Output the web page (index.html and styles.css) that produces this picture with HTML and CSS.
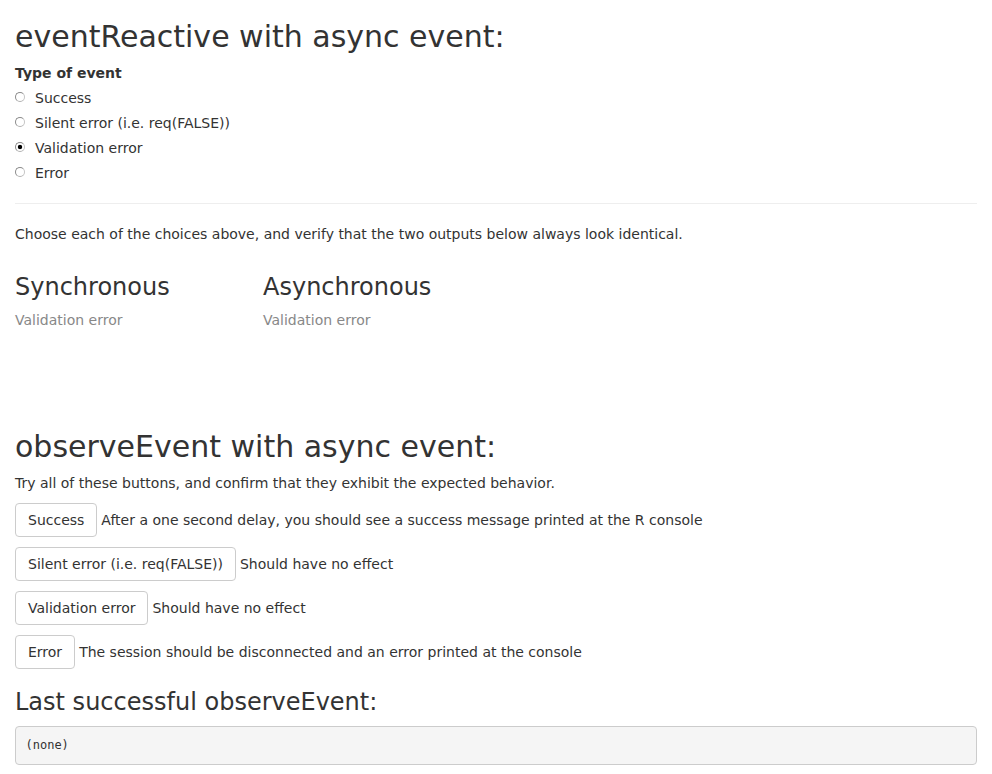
FILE: index.html
```
<!DOCTYPE html>
<html>
<head>
<meta charset="utf-8">
<title>async events</title>
<link rel="stylesheet" href="styles.css">
</head>
<body>
<div class="container">
  <h2>eventReactive with async event:</h2>
  <div class="form-group">
    <label class="control-label">Type of event</label>
    <div class="options">
      <div class="radio"><label><input type="radio" name="type" value="success"><span>Success</span></label></div>
      <div class="radio"><label><input type="radio" name="type" value="silent"><span>Silent error (i.e. req(FALSE))</span></label></div>
      <div class="radio"><label><input type="radio" name="type" value="validation" checked><span>Validation error</span></label></div>
      <div class="radio"><label><input type="radio" name="type" value="error"><span>Error</span></label></div>
    </div>
  </div>
  <hr>
  <p>Choose each of the choices above, and verify that the two outputs below always look identical.</p>
  <div class="row">
    <div class="col">
      <h3>Synchronous</h3>
      <div class="validation">Validation error</div>
    </div>
    <div class="col">
      <h3>Asynchronous</h3>
      <div class="validation">Validation error</div>
    </div>
  </div>

  <h2 class="second">observeEvent with async event:</h2>
  <p>Try all of these buttons, and confirm that they exhibit the expected behavior.</p>
  <div class="btn-row"><button class="btn">Success</button><span>After a one second delay, you should see a success message printed at the R console</span></div>
  <div class="btn-row"><button class="btn">Silent error (i.e. req(FALSE))</button><span>Should have no effect</span></div>
  <div class="btn-row"><button class="btn">Validation error</button><span>Should have no effect</span></div>
  <div class="btn-row"><button class="btn">Error</button><span>The session should be disconnected and an error printed at the console</span></div>

  <h3>Last successful observeEvent:</h3>
  <pre class="output">(none)</pre>
</div>
</body>
</html>
```
FILE: styles.css
```
* { box-sizing: border-box; }
html, body { margin: 0; padding: 0; }
body {
  font-family: "DejaVu Sans", sans-serif;
  font-size: 14px;
  line-height: 1.42857143;
  color: #333;
  background: #fff;
}
.container { padding: 0 15px; }
h2, h3 {
  font-weight: 500;
  line-height: 1.1;
  margin: 20px 0 10px;
  color: #333;
}
h2 { font-size: 30px; }
h3 { font-size: 24px; }
p { margin: 0 0 10px; }
.form-group { margin-bottom: 15px; }
.control-label {
  display: inline-block;
  font-weight: 700;
  margin-bottom: 5px;
}
.options { margin-top: -10px; }
.radio { margin: 10px 0; }
.radio + .radio { margin-top: -5px; }
.radio label {
  display: flex;
  align-items: flex-start;
  min-height: 20px;
  cursor: pointer;
}
.radio input {
  -webkit-appearance: none;
  appearance: none;
  width: 10px;
  height: 10px;
  margin: 4px 10px 0 0;
  flex: none;
  border: 1px solid #8a8a8a;
  border-right-color: #c4c4c4;
  border-bottom-color: #b0b0b0;
  border-radius: 50%;
  background: #fff;
}
.radio input:checked {
  background: radial-gradient(circle, #000 0, #000 1.8px, #fff 2.6px);
}
hr {
  margin: 20px 0;
  border: 0;
  border-top: 1px solid #eee;
}
.row {
  display: flex;
  margin: 0 -15px;
}
.col {
  width: 25%;
  padding: 0 15px;
}
.validation { color: #888; }
h2.second { margin-top: 100px; }
.btn-row {
  display: flex;
  align-items: baseline;
  gap: 4px;
  margin-bottom: 10px;
}
.btn {
  font-family: inherit;
  font-size: 14px;
  line-height: 20px;
  color: #333;
  background: #fff;
  border: 1px solid #ccc;
  border-radius: 4px;
  padding: 6px 12px;
  cursor: pointer;
}
pre.output {
  margin: 0 0 10px;
  padding: 9.5px;
  font-family: "DejaVu Sans Mono", monospace;
  font-size: 12px;
  line-height: 18.5px;
  color: #333;
  background: #f5f5f5;
  border: 1px solid #ccc;
  border-radius: 4px;
}
```
